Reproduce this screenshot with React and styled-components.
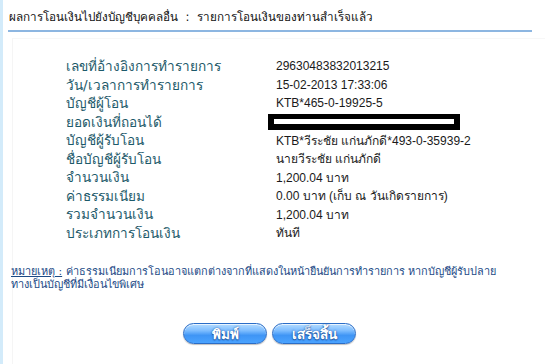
import React from "react";
import styled, { createGlobalStyle } from "styled-components";

const Global = createGlobalStyle`
  html, body { margin: 0; padding: 0; background: #fff; }
  body { font-family: Tahoma, "DejaVu Sans", "Noto Sans", sans-serif; }
`;

const Page = styled.div`
  width: 545px;
  height: 364px;
  box-sizing: border-box;
  border-left: 3px solid #d3ebfa;
  display: flex;
  flex-direction: column;
  overflow: hidden;
`;

const Header = styled.div`
  margin: 0 13px 0 5px;
  padding: 8px 0 4px 1px;
  border-bottom: 2px solid #8db6e1;
  font-size: 11.7px;
  color: #111;
  white-space: pre;
`;

const Panel = styled.div`
  margin: 6px 0 0 9px;
  border-left: 1px solid #f5f5f5;
  border-top: 1px solid #f7f7f7;
  padding: 18px 0 0 0;
  display: flex;
  flex-direction: column;
  flex: 1;
`;

const Table = styled.div`
  display: grid;
  grid-template-columns: 210px 1fr;
  grid-auto-rows: 18.5px;
  padding-left: 53px;
  align-items: center;
`;

const Label = styled.div`
  font-size: 13.6px;
  color: #1d5a6a;
  white-space: nowrap;
`;

const Value = styled.div`
  font-family: "Liberation Sans", Tahoma, "DejaVu Sans", sans-serif;
  font-size: 12px;
  color: #1a1a1a;
  white-space: nowrap;
`;

const Redacted = styled.div`
  width: 180px;
  height: 5px;
  border: solid #000;
  border-width: 5px 6px 6px 6px;
  background: #fff;
  margin-left: -8px;
`;

const Note = styled.div`
  margin: 23px 0 0 -2px;
  font-size: 10.9px;
  line-height: 13px;
  color: #1c4a86;
  white-space: nowrap;
`;

const NoteHead = styled.span`
  text-decoration: underline;
`;

const Buttons = styled.div`
  display: flex;
  justify-content: center;
  gap: 5px;
  margin: 32px 0 0 0;
  padding-right: 19px;
`;

const Btn = styled.button`
  width: 84px;
  height: 21px;
  padding: 0;
  border-radius: 11px;
  border: 1px solid #2b6dc6;
  background: linear-gradient(to bottom, #b5dcff 0%, #7dbdff 35%, #3f95f5 60%, #4aa3ff 100%);
  box-shadow: inset 0 1px 0 rgba(255,255,255,0.7), 0 1px 1px rgba(0,0,0,0.25);
  color: #fff;
  font-family: Tahoma, "DejaVu Sans", sans-serif;
  font-size: 13.5px;
  font-weight: bold;
  text-shadow: 0 0 2px #1b4f9a, 0 1px 1px #1b4f9a;
  display: flex;
  align-items: center;
  justify-content: center;
`;

const rows = [
  ["เลขที่อ้างอิงการทำรายการ", "29630483832013215"],
  ["วัน/เวลาการทำรายการ", "15-02-2013 17:33:06"],
  ["บัญชีผู้โอน", "KTB*465-0-19925-5"],
  ["ยอดเงินที่ถอนได้", null],
  ["บัญชีผู้รับโอน", "KTB*วีระชัย แก่นภักดี*493-0-35939-2"],
  ["ชื่อบัญชีผู้รับโอน", "นายวีระชัย แก่นภักดี"],
  ["จำนวนเงิน", "1,200.04 บาท"],
  ["ค่าธรรมเนียม", "0.00 บาท (เก็บ ณ วันเกิดรายการ)"],
  ["รวมจำนวนเงิน", "1,200.04 บาท"],
  ["ประเภทการโอนเงิน", "ทันที"],
];

export default function App() {
  return (
    <>
      <Global />
      <Page>
        <Header>{"ผลการโอนเงินไปยังบัญชีบุคคลอื่น  :  รายการโอนเงินของท่านสำเร็จแล้ว"}</Header>
        <Panel>
          <Table>
            {rows.map(([l, v]) => (
              <React.Fragment key={l}>
                <Label>{l}</Label>
                {v === null ? <Redacted /> : <Value>{v}</Value>}
              </React.Fragment>
            ))}
          </Table>
          <Note>
            <NoteHead>หมายเหตุ :</NoteHead>{"  "}ค่าธรรมเนียมการโอนอาจแตกต่างจากที่แสดงในหน้ายืนยันการทำรายการ หากบัญชีผู้รับปลาย
            <br />
            ทางเป็นบัญชีที่มีเงื่อนไขพิเศษ
          </Note>
          <Buttons>
            <Btn>พิมพ์</Btn>
            <Btn>เสร็จสิ้น</Btn>
          </Buttons>
        </Panel>
      </Page>
    </>
  );
}
